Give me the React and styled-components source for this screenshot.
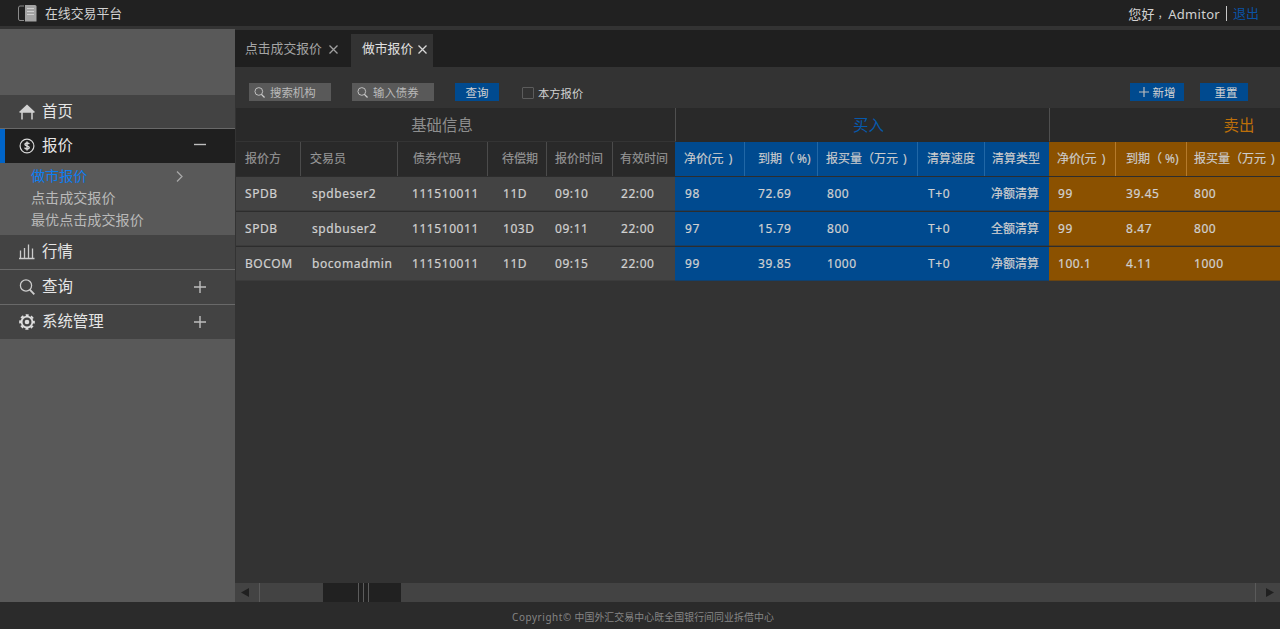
import React, { useState } from "react";

// style
import styled, { createGlobalStyle } from "styled-components";

const GlobalStyle = createGlobalStyle`
  * {
    box-sizing: border-box;
  }

  body {
    margin: 0;
    overflow: hidden;
    background: #333333;
    color: #d2d2d2;
    font-family: "Noto Sans", "Noto Sans CJK SC", sans-serif;
    font-size: 12px;
  }

  button {
    font-family: inherit;
    border: 0;
    padding: 0;
    cursor: pointer;
  }
`;

const Page = styled.div`
  height: 629px;
  display: flex;
  flex-direction: column;
`;

const TopBar = styled.header`
  height: 29px;
  flex: none;
  display: flex;
  align-items: center;
  justify-content: space-between;
  padding: 0 21px 0 18px;
  background: #212121;
  border-bottom: 3px solid #333333;
  font-size: 13px;
`;

const Brand = styled.div`
  display: flex;
  align-items: center;
  gap: 8px;
  padding-bottom: 2px;
  font-size: 12.85px;

  svg {
    margin-top: 2px;
  }
`;

const Account = styled.div`
  display: flex;
  align-items: center;
  height: 26px;
  padding-top: 1px;
  letter-spacing: 0.3px;
`;

const Comma = styled.span`
  margin-left: 3px;
  font-size: 10px;
  line-height: 18px;
`;

const Logout = styled.a`
  margin-left: 6px;
  padding-left: 6px;
  border-left: 1px solid #c8c8c8;
  line-height: 15px;
  letter-spacing: 0;
  color: #0a53a4;
`;

const Body = styled.div`
  flex: 1;
  min-height: 0;
  display: flex;
`;

// sidebar
const Sidebar = styled.nav`
  width: 235px;
  flex: none;
  padding-top: 66px;
  background: #595959;
`;

const MenuItem = styled.div`
  height: ${({ $height }) => $height || 35}px;
  display: flex;
  align-items: center;
  padding: 0 29px 3px ${({ $active }) => ($active ? 14 : 19)}px;
  background: ${({ $active }) => ($active ? "#1f1f1f" : "#434343")};
  border-left: ${({ $active }) => ($active ? "5px solid #0064c8" : "0")};
  border-bottom: ${({ $line }) => ($line ? "1px solid #696969" : "0")};
  color: #e6e6e6;
  font-size: 15.4px;
`;

const MenuIcon = styled.span`
  display: flex;
  flex: none;
  margin: 3px 7px 0 0;
`;

const MenuToggle = styled.span`
  display: flex;
  margin-left: auto;
  margin-top: ${({ $open }) => ($open ? 1 : 3)}px;
`;

const SubMenu = styled.div`
  height: 72px;
  padding: 1px 51px 0 31px;
`;

const SubItem = styled.div`
  height: 22px;
  display: flex;
  align-items: center;
  justify-content: space-between;
  font-size: 14.1px;
  color: ${({ $active }) => ($active ? "#0e7df0" : "#b9b9b9")};

  svg {
    margin-top: 2px;
  }
`;

// content
const Main = styled.main`
  flex: 1;
  min-width: 0;
  display: flex;
  flex-direction: column;
  overflow: hidden;
`;

const Tabs = styled.div`
  height: 37px;
  margin-top: 1px;
  flex: none;
  display: flex;
  align-items: flex-end;
  background: #1f1f1f;
`;

const Tab = styled.div`
  width: ${({ $width }) => $width}px;
  height: 33px;
  display: flex;
  align-items: center;
  gap: ${({ $active }) => ($active ? 5 : 7)}px;
  padding: 0 0 6px ${({ $active }) => ($active ? 11 : 10)}px;
  background: ${({ $active }) => ($active ? "#333333" : "transparent")};
  color: ${({ $active }) => ($active ? "#e0e0e0" : "#a5a5a5")};
  font-size: 12.8px;

  svg {
    flex: none;
    margin-top: 3px;
  }
`;

const Toolbar = styled.div`
  height: 41px;
  flex: none;
  display: flex;
  align-items: flex-start;
  padding: 16px 32px 0 14px;
`;

const SearchBox = styled.div`
  width: 82px;
  height: 18px;
  margin-right: 21px;
  display: flex;
  align-items: center;
  gap: 5px;
  padding-left: 5px;
  background: #595959;
  color: #b9b9b9;
  font-size: 11.4px;
`;

const BlueButton = styled.button`
  width: ${({ $width }) => $width}px;
  height: 18px;
  display: flex;
  align-items: center;
  justify-content: center;
  gap: 4px;
  padding-top: ${({ $icon }) => ($icon ? 0 : 1)}px;
  padding-left: ${({ $shift }) => $shift || 0}px;
  background: #004a8f;
  color: #d2d2d2;
  font-size: 11.5px;
  line-height: 17px;
`;

const CheckLabel = styled.label`
  height: 19px;
  display: flex;
  align-items: center;
  gap: 4px;
  margin-left: 23px;
  color: #d0d0d0;
  font-size: 11.3px;
`;

const CheckBox = styled.span`
  width: 12px;
  height: 12px;
  border: 1px solid #5c5c5c;
  border-radius: 1px;
`;

const Actions = styled.div`
  margin-left: auto;
  display: flex;
  gap: 16px;
`;

// table
const Table = styled.div`
  flex: 1;
  width: 1192px;
  padding-left: 1px;
`;

const Row = styled.div`
  display: flex;
`;

const groupColors = {
  base: { head: "#292929", cell: "#434343", line: "#4b4b4b", title: "#8e8e8e" },
  buy: { head: "#004a8f", cell: "#004a8f", line: "#2167a6", title: "#0659ad" },
  sell: { head: "#8b5100", cell: "#8b5100", line: "#b57a2b", title: "#bd6f09" },
};

const GroupHead = styled.div`
  width: ${({ $width }) => $width}px;
  height: 34px;
  flex: none;
  display: flex;
  align-items: center;
  justify-content: center;
  background: #292929;
  border-left: ${({ $kind }) => ($kind === "base" ? "0" : "1px solid #4f4f4f")};
  border-bottom: 1px solid
    ${({ $kind }) => ($kind === "base" ? "#343434" : "#292929")};
  padding-left: ${({ $kind }) => ($kind === "buy" ? 12 : 0)}px;
  padding-right: ${({ $kind }) => ($kind === "buy" ? 0 : 27)}px;
  color: ${({ $kind }) => groupColors[$kind].title};
  font-size: 15.4px;
`;

const HeadCell = styled.div`
  width: ${({ $width }) => $width}px;
  height: 34px;
  flex: none;
  padding-left: ${({ $pad }) => $pad}px;
  background: ${({ $kind }) => groupColors[$kind].head};
  border-right: ${({ $last, $kind }) =>
    $last ? "0" : `1px solid ${groupColors[$kind].line}`};
  color: ${({ $kind }) => ($kind === "base" ? "#969696" : "#cdcdcd")};
  font-size: 12px;
  line-height: 33px;
  white-space: pre;
  -webkit-text-stroke: 0.15px;
`;

const Cell = styled.div`
  width: ${({ $width }) => $width}px;
  height: 34px;
  margin-top: 1px;
  flex: none;
  padding-left: ${({ $pad }) => $pad}px;
  background: ${({ $kind }) => groupColors[$kind].cell};
  box-shadow: 0 -1px #2d2d2d, inset 0 -1px rgba(45, 45, 45, 0.35);
  color: #d0d0d0;
  line-height: 33px;
  letter-spacing: ${({ $cjk }) => ($cjk ? 0 : 0.57)}px;
  white-space: nowrap;
  -webkit-text-stroke: 0.2px;
`;

const ScrollBar = styled.div`
  height: 19px;
  flex: none;
  display: flex;
  background: #434343;
`;

const ScrollArrow = styled.div`
  width: 25px;
  display: flex;
  align-items: center;
  justify-content: center;
  padding-right: ${({ $right }) => ($right ? 0 : 3)}px;
  padding-left: ${({ $right }) => ($right ? 2 : 0)}px;
  border-left: ${({ $right }) => ($right ? "1px solid #5a5a5a" : "0")};
  border-right: ${({ $right }) => ($right ? "0" : "1px solid #5a5a5a")};
`;

const Track = styled.div`
  flex: 1;
  padding-left: 63px;
`;

const Thumb = styled.div`
  width: 78px;
  height: 19px;
  display: flex;
  justify-content: center;
  gap: 4px;
  padding-left: 3px;
  background: #212121;
`;

const Grip = styled.span`
  width: 1px;
  background: #5c5c5c;
`;

const Footer = styled.footer`
  height: 27px;
  flex: none;
  padding: 0 0 0 6px;
  background: #2b2b2b;
  color: #868686;
  font-size: 9.9px;
  line-height: 30px;
  text-align: center;
  letter-spacing: 0.1px;

  span {
    letter-spacing: 0.6px;
  }
`;

// icons
const BookIcon = () => (
  <svg width="19" height="17" viewBox="0 0 19 17">
    <path d="M6 1H2Q.5 1 .5 3v11q0 1.5 1.5 1.5h4" fill="none" stroke="#8a8a8a" />
    <path d="M7 0h10q1.500 0 1.500 1.500V16.500H7z" fill="#a3a3a3" />
    <path d="M9 3.500h7M9 6.500h7M9 9.500h7" stroke="#cfcfcf" />
  </svg>
);

const HomeIcon = () => (
  <svg width="16" height="16" viewBox="0 0 16 16">
    <path d="M0 8L8 .5 16 8l-1 .8H1z" fill="#d2d2d2" />
    <path d="M3 8v7.500M13 8v7.500" stroke="#d2d2d2" strokeWidth="1.500" />
  </svg>
);

const MoneyIcon = () => (
  <svg width="16" height="16" viewBox="0 0 16 16" fill="none" stroke="#d8d8d8">
    <circle cx="8" cy="8" r="6.900" strokeWidth="1.200" />
    <path
      d="M10.200 6.200C10 4.800 6 4.500 6 6.400c0 1.900 4.200 1.100 4.200 3.200 0 2-4.200 1.700-4.500.1M8 3.600v8.800"
      strokeWidth="1.500"
    />
  </svg>
);

const ChartIcon = () => (
  <svg width="16" height="16" viewBox="0 0 16 16">
    <path
      d="M1.500 15V6.500M5.500 15V4M9.500 15V.5M13.500 15V4.500M0 14.500h15.500"
      fill="none"
      stroke="#cccccc"
      strokeWidth="1.300"
    />
  </svg>
);

const SearchIcon = ({ size = 16 }) => (
  <svg width={size} height={size} viewBox="0 0 16 16" fill="none" stroke="#cccccc">
    <circle cx="7" cy="6.500" r="5.600" strokeWidth="1.300" />
    <path d="M10.800 10.700l4.500 4.600" strokeWidth="1.900" />
  </svg>
);

const GearIcon = () => (
  <svg width="16" height="16" viewBox="0 0 16 16" fill="none" stroke="#dedede">
    <circle cx="8" cy="8" r="5.400" strokeWidth="1.800" />
    <circle
      cx="8"
      cy="8"
      r="6.900"
      strokeWidth="1.900"
      strokeDasharray="3 2.420"
      strokeDashoffset="1.500"
    />
    <circle cx="8" cy="8" r="2.300" fill="#dedede" stroke="none" />
  </svg>
);

const ToggleIcon = ({ open, size = 12 }) => (
  <svg width={size} height={size} viewBox="0 0 12 12">
    <path
      d={open ? "M0 5.500h12" : "M0 6h12M6 0v12"}
      fill="none"
      stroke="#bebebe"
      strokeWidth="1.400"
    />
  </svg>
);

const CloseIcon = ({ color }) => (
  <svg width="9" height="9" viewBox="0 0 9 9">
    <path d="M.5.5l8 8M8.500.5l-8 8" stroke={color} strokeWidth="1.300" />
  </svg>
);

const ChevronIcon = () => (
  <svg width="8" height="11" viewBox="0 0 8 11">
    <path d="M1 .5l5 5-5 5" fill="none" stroke="#a8a8a8" strokeWidth="1.300" />
  </svg>
);

const Arrow = ({ d }) => (
  <svg width="9" height="9" viewBox="0 0 9 9">
    <path d={d} fill="#202020" />
  </svg>
);

// data
const groups = [
  { kind: "base", title: "基础信息", width: 439 },
  { kind: "buy", title: "买入", width: 374 },
  { kind: "sell", title: "卖出", width: 406 },
];

const columns = [
  { title: "报价方", kind: "base", width: 65, pad: 9 },
  { title: "交易员", kind: "base", width: 97, pad: 9, cellPad: 11 },
  { title: "债券代码", kind: "base", width: 90, pad: 15, cellPad: 14 },
  { title: "待偿期", kind: "base", width: 59, pad: 14, cellPad: 15 },
  { title: "报价时间", kind: "base", width: 66, pad: 8 },
  { title: "有效时间", kind: "base", width: 62, pad: 7, cellPad: 8, last: true },
  { title: "净价(元\u2009 )", kind: "buy", width: 70, pad: 9, cellPad: 10 },
  { title: "到期（ %)", kind: "buy", width: 73, pad: 13 },
  { title: "报买量（万元\u2009 )", kind: "buy", width: 100, pad: 8, cellPad: 9 },
  { title: "清算速度", kind: "buy", width: 67, pad: 9, cellPad: 10 },
  { title: "清算类型", kind: "buy", width: 64, pad: 7, cellPad: 6, cjk: true, last: true },
  { title: "净价(元\u2009 )", kind: "sell", width: 67, pad: 8, cellPad: 9 },
  { title: "到期（ %)", kind: "sell", width: 71, pad: 10 },
  { title: "报买量（万元\u2009 )", kind: "sell", width: 268, pad: 7, last: true },
];

const quotes = [
  ["SPDB", "spdbeser2", "111510011", "11D", "09:10", "22:00", "98", "72.69", "800", "T+0", "净额清算", "99", "39.45", "800"],
  ["SPDB", "spdbuser2", "111510011", "103D", "09:11", "22:00", "97", "15.79", "800", "T+0", "全额清算", "99", "8.47", "800"],
  ["BOCOM", "bocomadmin", "111510011", "11D", "09:15", "22:00", "99", "39.85", "1000", "T+0", "净额清算", "100.1", "4.11", "1000"],
];

const subItems = ["做市报价", "点击成交报价", "最优点击成交报价"];

const App = () => {
  const [current, setCurrent] = useState("做市报价");

  return (
    <>
      <GlobalStyle />
      <Page>
        <TopBar>
          <Brand>
            <BookIcon />
            在线交易平台
          </Brand>
          <Account>
            您好<Comma>，</Comma>Admitor
            <Logout>退出</Logout>
          </Account>
        </TopBar>

        <Body>
          <Sidebar>
            <MenuItem $height={34} $line>
              <MenuIcon>
                <HomeIcon />
              </MenuIcon>
              首页
            </MenuItem>
            <MenuItem $height={34} $active>
              <MenuIcon>
                <MoneyIcon />
              </MenuIcon>
              报价
              <MenuToggle $open>
                <ToggleIcon open />
              </MenuToggle>
            </MenuItem>
            <SubMenu>
              {subItems.map((item) => (
                <SubItem
                  key={item}
                  $active={item === current}
                  onClick={() => setCurrent(item)}
                >
                  {item}
                  {item === current && <ChevronIcon />}
                </SubItem>
              ))}
            </SubMenu>
            <MenuItem $line>
              <MenuIcon>
                <ChartIcon />
              </MenuIcon>
              行情
            </MenuItem>
            <MenuItem $line>
              <MenuIcon>
                <SearchIcon />
              </MenuIcon>
              查询
              <MenuToggle>
                <ToggleIcon />
              </MenuToggle>
            </MenuItem>
            <MenuItem $height={34}>
              <MenuIcon>
                <GearIcon />
              </MenuIcon>
              系统管理
              <MenuToggle>
                <ToggleIcon />
              </MenuToggle>
            </MenuItem>
          </Sidebar>

          <Main>
            <Tabs>
              <Tab $width={116}>
                点击成交报价
                <CloseIcon color="#a0a0a0" />
              </Tab>
              <Tab $width={82} $active>
                做市报价
                <CloseIcon color="#d8d8d8" />
              </Tab>
            </Tabs>

            <Toolbar>
              <SearchBox>
                <SearchIcon size={11} />
                搜索机构
              </SearchBox>
              <SearchBox>
                <SearchIcon size={11} />
                输入债券
              </SearchBox>
              <BlueButton $width={44}>查询</BlueButton>
              <CheckLabel>
                <CheckBox />
                本方报价
              </CheckLabel>
              <Actions>
                <BlueButton $width={54} $icon>
                  <ToggleIcon size={10} />
                  新增
                </BlueButton>
                <BlueButton $width={48} $shift={4}>
                  重置
                </BlueButton>
              </Actions>
            </Toolbar>

            <Table>
              <Row>
                {groups.map((group) => (
                  <GroupHead key={group.kind} $kind={group.kind} $width={group.width}>
                    {group.title}
                  </GroupHead>
                ))}
              </Row>
              <Row>
                {columns.map((col, i) => (
                  <HeadCell
                    key={i}
                    $kind={col.kind}
                    $width={col.width}
                    $pad={col.pad}
                    $last={col.last}
                  >
                    {col.title}
                  </HeadCell>
                ))}
              </Row>
              {quotes.map((quote, i) => (
                <Row key={i}>
                  {columns.map((col, j) => (
                    <Cell
                      key={j}
                      $kind={col.kind}
                      $width={col.width}
                      $pad={col.cellPad || col.pad}
                      $cjk={col.cjk}
                    >
                      {quote[j]}
                    </Cell>
                  ))}
                </Row>
              ))}
            </Table>

            <ScrollBar>
              <ScrollArrow>
                <Arrow d="M0 4.500L8 0v9z" />
              </ScrollArrow>
              <Track>
                <Thumb>
                  <Grip />
                  <Grip />
                  <Grip />
                </Thumb>
              </Track>
              <ScrollArrow $right>
                <Arrow d="M9 4.500L1 0v9z" />
              </ScrollArrow>
            </ScrollBar>
          </Main>
        </Body>

        <Footer>
          <span>Copyright©</span> 中国外汇交易中心既全国银行间同业拆借中心
        </Footer>
      </Page>
    </>
  );
};

export default App;
